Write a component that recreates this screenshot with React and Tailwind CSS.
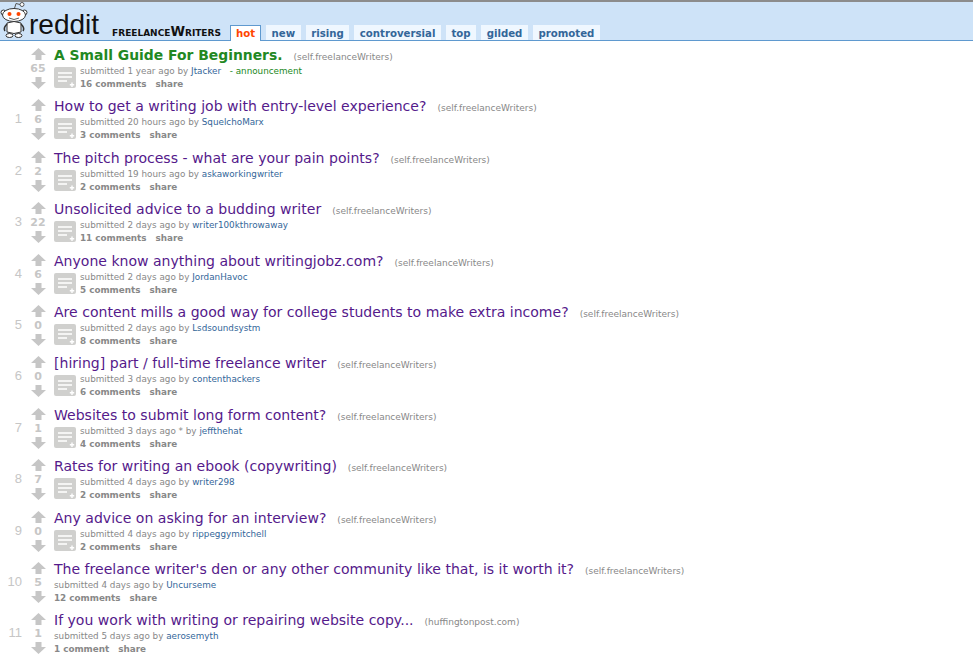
import React from 'react'

const posts = [
  { rank: '', score: '65', title: 'A Small Guide For Beginners.', domain: 'self.freelanceWriters', time: '1 year', author: 'Jtacker', comments: '16 comments', sticky: true },
  { rank: '1', score: '6', title: 'How to get a writing job with entry-level experience?', domain: 'self.freelanceWriters', time: '20 hours', author: 'SquelchoMarx', comments: '3 comments' },
  { rank: '2', score: '2', title: 'The pitch process - what are your pain points?', domain: 'self.freelanceWriters', time: '19 hours', author: 'askaworkingwriter', comments: '2 comments' },
  { rank: '3', score: '22', title: 'Unsolicited advice to a budding writer', domain: 'self.freelanceWriters', time: '2 days', author: 'writer100kthrowaway', comments: '11 comments' },
  { rank: '4', score: '6', title: 'Anyone know anything about writingjobz.com?', domain: 'self.freelanceWriters', time: '2 days', author: 'JordanHavoc', comments: '5 comments' },
  { rank: '5', score: '0', title: 'Are content mills a good way for college students to make extra income?', domain: 'self.freelanceWriters', time: '2 days', author: 'Lsdsoundsystm', comments: '8 comments' },
  { rank: '6', score: '0', title: '[hiring] part / full-time freelance writer', domain: 'self.freelanceWriters', time: '3 days', author: 'contenthackers', comments: '6 comments' },
  { rank: '7', score: '1', title: 'Websites to submit long form content?', domain: 'self.freelanceWriters', time: '3 days', star: true, author: 'jeffthehat', comments: '4 comments' },
  { rank: '8', score: '7', title: 'Rates for writing an ebook (copywriting)', domain: 'self.freelanceWriters', time: '4 days', author: 'writer298', comments: '2 comments' },
  { rank: '9', score: '0', title: 'Any advice on asking for an interview?', domain: 'self.freelanceWriters', time: '4 days', author: 'rippeggymitchell', comments: '2 comments' },
  { rank: '10', score: '5', title: "The freelance writer's den or any other community like that, is it worth it?", domain: 'self.freelanceWriters', time: '4 days', author: 'Uncurseme', comments: '12 comments', noThumb: true },
  { rank: '11', score: '1', title: 'If you work with writing or repairing website copy...', domain: 'huffingtonpost.com', time: '5 days', author: 'aerosemyth', comments: '1 comment', noThumb: true },
]

const tabs = ['hot', 'new', 'rising', 'controversial', 'top', 'gilded', 'promoted']

function Snoo() {
  return (
    <svg width="28" height="38" viewBox="0 0 28 38" className="shrink-0 -mt-[2px]">
      <circle cx="22" cy="3.5" r="2" fill="#fff" stroke="#555" strokeWidth="1" />
      <path d="M14 9 L16 2.5 L20 3.5" fill="none" stroke="#555" strokeWidth="1" />
      <circle cx="3.5" cy="11.5" r="2.5" fill="#fff" stroke="#333" />
      <circle cx="24.5" cy="11.5" r="2.5" fill="#fff" stroke="#333" />
      <ellipse cx="14" cy="14" rx="11.5" ry="6.5" fill="#fff" stroke="#333" />
      <circle cx="9.5" cy="13" r="2" fill="#ff4500" />
      <circle cx="18.5" cy="13" r="2" fill="#ff4500" />
      <path d="M9 17 Q14 20 19 17" fill="none" stroke="#333" strokeWidth="0.8" />
      <path d="M7 22 Q14 19 21 22 L21 31 Q14 34 7 31 Z" fill="#fff" stroke="#333" />
      <path d="M7 23 Q3 27 5 30 M21 23 Q25 27 23 30" fill="none" stroke="#333" strokeWidth="1.5" />
      <ellipse cx="9.5" cy="34.5" rx="3.5" ry="2" fill="#fff" stroke="#333" />
      <ellipse cx="18.5" cy="34.5" rx="3.5" ry="2" fill="#fff" stroke="#333" />
    </svg>
  )
}

function Arrow({ down }) {
  return (
    <svg width="15" height="12" viewBox="0 0 15 12" className={down ? 'rotate-180' : ''}>
      <path d="M7.5 0 L15 7 L10.5 7 L10.5 12 L4.5 12 L4.5 7 L0 7 Z" fill="#c6c6c6" />
    </svg>
  )
}

function Thumb() {
  return (
    <svg width="22" height="22" viewBox="0 0 22 22" className="shrink-0 mt-[2px]">
      <rect width="22" height="21" rx="2" fill="#d0d0ce" />
      <path d="M4 6 H18 M4 10 H18 M4 14 H13" stroke="#fff" strokeWidth="1.6" />
      <path d="M18 15.5 V20 M15.8 17.8 H20.2" stroke="#fff" strokeWidth="1.4" />
    </svg>
  )
}

function Post({ post }) {
  return (
    <div className="flex h-[51.4px]">
      <div className="w-[22px] pt-[13px] text-right text-[13px] leading-[20px] font-['Liberation_Sans',sans-serif] text-[#c6c6c6] shrink-0">{post.rank}</div>
      <div className="w-[32px] flex flex-col items-center shrink-0 pt-[3px] gap-[1px]">
        <Arrow />
        <div className="text-[11px] font-bold leading-[15px] text-[#c6c6c6] h-[15px]">{post.score}</div>
        <Arrow down />
      </div>
      <div className="min-w-0 pt-[1px]">
        <div className="flex items-baseline whitespace-nowrap leading-[19px] h-[19px]">
          <span className={post.sticky ? 'text-[13.9px] font-bold text-[#228822]' : 'text-[14.05px] text-[#551a8b]'}>{post.title}</span>
          <span className="ml-[11px] text-[9px] text-[#888]">({post.domain})</span>
        </div>
        <div className="flex gap-[4px]">
          {!post.noThumb && <Thumb />}
          <div>
            <div className="text-[8.8px] leading-[13px] text-[#888] whitespace-nowrap">
              submitted {post.time} ago{post.star ? ' *' : ''} by <span className="text-[#369]">{post.author}</span>
              {post.sticky && <span className="ml-[3px] text-[#228822]">&nbsp;&nbsp;- announcement</span>}
            </div>
            <div className="flex gap-[9px] text-[8.8px] leading-[13px] font-bold text-[#888] whitespace-nowrap">
              <span>{post.comments}</span>
              <span>share</span>
            </div>
          </div>
        </div>
      </div>
    </div>
  )
}

export default function App() {
  return (
    <div className="w-[973px] h-[660px] overflow-hidden bg-white font-['DejaVu_Sans',Verdana,sans-serif]">
      <div className="h-[41px] flex items-end bg-[#cee3f8] border-t-2 border-[#8c8c8c] border-b border-b-[#5f99cf]">
        <div className="flex items-end self-end mb-[1px]">
          <Snoo />
          <span className="ml-[1px] mb-[-1px] text-[28px] leading-[30px] font-['Liberation_Sans',sans-serif] text-[#111]">reddit</span>
        </div>
        <span className="ml-[13px] mb-[1px] text-[13.2px] leading-[14px] font-bold [font-variant:small-caps] text-[#111]">freelanceWriters</span>
        <div className="ml-[9px] flex gap-[5px] -mb-[1px]">
          {tabs.map((tab) => (
            <span
              key={tab}
              className={tab === 'hot'
                ? 'h-[16px] px-[5px] text-[10.2px] leading-[16px] font-bold bg-white text-[#ff4500] border border-b-0 border-[#5f99cf]'
                : 'h-[15px] px-[5.5px] text-[10.2px] leading-[17px] font-bold bg-[#eff7ff] text-[#369]'}
            >
              {tab}
            </span>
          ))}
        </div>
      </div>
      <div className="pt-[4px]">
        {posts.map((post) => (
          <Post key={post.title} post={post} />
        ))}
      </div>
    </div>
  )
}
